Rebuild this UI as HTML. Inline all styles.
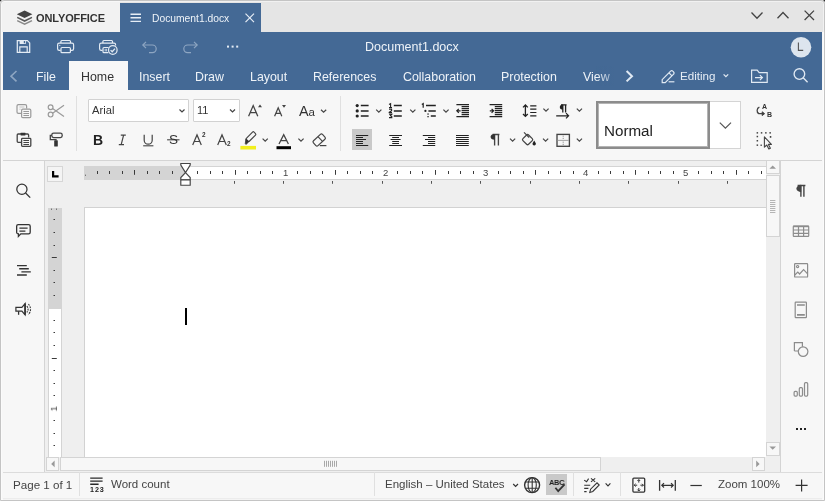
<!DOCTYPE html>
<html><head><meta charset="utf-8">
<style>
*{margin:0;padding:0;box-sizing:border-box}
html,body{width:825px;height:501px;overflow:hidden;background:#2b2b2b}
body{font-family:"Liberation Sans",sans-serif;position:relative}
.a{position:absolute}
svg{position:absolute;overflow:visible}
#win{position:absolute;left:0;top:0;width:825px;height:501px;background:#f7f7f7;border-radius:4px 4px 0 0;overflow:hidden}
#frame{position:absolute;left:0;top:0;width:825px;height:501px;border:1px solid #c4c4c4;border-radius:4px 4px 0 0;pointer-events:none;box-shadow:inset 0 0 0 1px rgba(255,255,255,0.45)}
.t{position:absolute;white-space:nowrap;line-height:1;will-change:transform}
</style></head><body>
<div id="win">
  <!-- title bar -->
  <div class="a" style="left:0;top:0;width:825px;height:32px;background:#e5e5e5"></div>
  <div class="a" style="left:0;top:0;width:120px;height:32px;background:#f2f2f2"></div>
  <div class="a" style="left:120px;top:3px;width:141px;height:29px;background:#446995"></div>

  <!-- logo -->
  <svg style="left:0;top:0" width="120" height="32">
    <path d="M24.6 10.6 L32.4 14.3 L24.6 18 L16.8 14.3 Z" fill="#444"/>
    <path d="M17.2 17.4 L24.6 21 L32 17.4" fill="none" stroke="#5a5a5a" stroke-width="1.6"/>
    <path d="M17.2 20.6 L24.6 24.2 L32 20.6" fill="none" stroke="#8a8a8a" stroke-width="1.6"/>
  </svg>
  <div class="t" style="left:36px;top:13px;font-size:11px;font-weight:bold;color:#333;letter-spacing:-0.1px">ONLYOFFICE</div>
  <!-- doc tab -->
  <svg style="left:0;top:0" width="270" height="32">
    <path d="M130.5 14.2H141M130.5 17.8H141M130.5 21.4H141" stroke="#e6edf5" stroke-width="1.4"/>
    <path d="M245.5 13.7L254 22.2M254 13.7L245.5 22.2" stroke="#e6edf5" stroke-width="1.2"/>
  </svg>
  <div class="t" style="left:151.5px;top:13.5px;font-size:10.3px;color:#eef3f8">Document1.docx</div>
  <!-- window controls -->
  <svg style="left:740px;top:0" width="85" height="32">
    <path d="M11.5 12.5L17 18.3L22.5 12.5" fill="none" stroke="#444" stroke-width="1.3"/>
    <path d="M37.5 18.3L43 12.5L48.5 18.3" fill="none" stroke="#444" stroke-width="1.3"/>
    <path d="M64.6 10.6L74 20M74 10.6L64.6 20" fill="none" stroke="#444" stroke-width="1.3"/>
  </svg>
  <!-- blue header -->
  <div class="a" style="left:3px;top:32px;width:819px;height:58px;background:#446995"></div>

  <!-- home tab -->
  <div class="a" style="left:69px;top:61px;width:59px;height:29px;background:#f7f7f7"></div>
  <!-- header icons -->
  <svg style="left:0;top:0" width="260" height="60" fill="none" stroke="#e3ebf4" stroke-width="1.2">
    <!-- save -->
    <path d="M17.3 40.6H27.4L29.7 42.9V52.3H17.3Z" stroke-width="1.25"/>
    <rect x="19.6" y="40.4" width="6.2" height="3.6" fill="#e3ebf4" stroke="none"/>
    <rect x="23.8" y="41" width="1.2" height="2.2" fill="#446995" stroke="none"/>
    <path d="M19.8 52.3V46.9H27.2V52.3" stroke-width="1.2"/>
    <!-- print -->
    <path d="M60.9 43V41.4A0.9 0.9 0 0 1 61.8 40.5H69.6A0.9 0.9 0 0 1 70.5 41.4V43" stroke-width="1.2"/>
    <path d="M60.6 50.3H59.2A1.6 1.6 0 0 1 57.6 48.7V44.8A1.6 1.6 0 0 1 59.2 43.2H72A1.6 1.6 0 0 1 73.6 44.8V48.7A1.6 1.6 0 0 1 72 50.3H70.6" stroke-width="1.2"/>
    <rect x="61" y="47.5" width="9.4" height="5.2" rx="1" stroke-width="1.2"/>
    <circle cx="59.8" cy="45.3" r="0.6" fill="#e3ebf4" stroke="none"/>
    <!-- quick print -->
    <path d="M102.9 43V41.4A0.9 0.9 0 0 1 103.8 40.5H111.6A0.9 0.9 0 0 1 112.5 41.4V43" stroke-width="1.2"/>
    <path d="M102.6 50.3H101.2A1.6 1.6 0 0 1 99.6 48.7V44.8A1.6 1.6 0 0 1 101.2 43.2H114A1.6 1.6 0 0 1 115.6 44.8V45.4" stroke-width="1.2"/>
    <path d="M108.6 47.5H104A1 1 0 0 0 103 48.5V51.7A1 1 0 0 0 104 52.7H108.4" stroke-width="1.2"/>
    <path d="M105.2 48.8V51.4M106.6 48.8V51.4" stroke-width="0.8"/>
    <circle cx="112.8" cy="50" r="4.3" stroke-width="1.2"/>
    <path d="M110.6 50.1L112.2 51.7L115 48.6" stroke-width="1.3"/>
    <!-- undo/redo -->
    <g stroke="#8ea6c2">
      <path d="M146 41.8L142.8 45L146 48.2"/>
      <path d="M143 45H152.4A3.8 3.8 0 0 1 152.4 52.6H149"/>
      <path d="M194 41.8L197.2 45L194 48.2"/>
      <path d="M197 45H187.6A3.8 3.8 0 0 0 187.6 52.6H191"/>
    </g>
    <g fill="#e3ebf4" stroke="none">
      <rect x="227" y="45.6" width="2" height="2"/>
      <rect x="231.6" y="45.6" width="2" height="2"/>
      <rect x="236.2" y="45.6" width="2" height="2"/>
    </g>
  </svg>
  <div class="t" style="left:365px;top:41.2px;font-size:12.5px;color:#eef3f8">Document1.docx</div>
  <svg style="left:780px;top:30px" width="40" height="30">
    <circle cx="21" cy="17.2" r="10.3" fill="#dde5ee"/>
    <path d="M18.4 12.6V20.4H23.2" fill="none" stroke="#555" stroke-width="1.1"/>
  </svg>
  <!-- tabs -->
  <svg style="left:0;top:60px" width="30" height="30">
    <path d="M16.5 11L11 16.2L16.5 21.4" fill="none" stroke="#8ea6c2" stroke-width="1.6"/>
  </svg>
  <div class="t" style="left:36px;top:70.5px;font-size:12.4px;color:#eef3f8">File</div>
  <div class="t" style="left:81px;top:70.5px;font-size:12.4px;color:#333">Home</div>
  <div class="t" style="left:139.3px;top:70.5px;font-size:12.4px;color:#eef3f8">Insert</div>
  <div class="t" style="left:195.3px;top:70.5px;font-size:12.4px;color:#eef3f8">Draw</div>
  <div class="t" style="left:249.5px;top:70.5px;font-size:12.4px;color:#eef3f8">Layout</div>
  <div class="t" style="left:312.8px;top:70.5px;font-size:12.4px;color:#eef3f8">References</div>
  <div class="t" style="left:402.8px;top:70.5px;font-size:12.4px;color:#eef3f8">Collaboration</div>
  <div class="t" style="left:500.5px;top:70.5px;font-size:12.4px;color:#eef3f8">Protection</div>
  <div class="t" style="left:582.5px;top:70.5px;font-size:12.4px;color:#eef3f8">View</div>
  <div class="a" style="left:596px;top:66px;width:18px;height:20px;background:linear-gradient(90deg,rgba(68,105,149,0),rgba(68,105,149,0.55))"></div>
  <svg style="left:600px;top:60px" width="225" height="30" fill="none" stroke="#e0e9f3" stroke-width="1.35">
    <path d="M26.6 11L32 16.2L26.6 21.4" stroke-width="2"/>
    <!-- pencil -->
    <path d="M62.2 19.6L70.6 11.2A1.5 1.5 0 0 1 72.8 11.2L73.6 12A1.5 1.5 0 0 1 73.6 14.2L65.2 22.6H62.2Z" stroke-width="1.2"/>
    <path d="M69 12.8L72 15.8" stroke-width="1.2"/>
    <path d="M68.6 21.8H74.4" stroke-width="1.2"/>
    <path d="M123.6 14.4L125.9 16.6L128.2 14.4" stroke-width="1.3"/>
    <!-- folder -->
    <path d="M151.6 22.4V10.2H157.2L159.2 12.6H167.2V22.4Z" stroke-width="1.2"/>
    <path d="M155 17.6H162.4M159.9 15.1L162.4 17.6L159.9 20.1" stroke-width="1.2"/>
    <!-- search -->
    <circle cx="199.4" cy="14" r="5.3"/>
    <path d="M203.2 17.8L207.6 22.2"/>
  </svg>
  <div class="t" style="left:679.5px;top:70px;font-size:11.6px;color:#e6edf5">Editing</div>
  <!-- toolbar -->
  <div class="a" style="left:3px;top:90px;width:819px;height:71px;background:#f7f7f7;border-bottom:1px solid #d4d4d4"></div>

  <!-- toolbar content -->
  <div class="a" style="left:76px;top:96px;width:1px;height:55px;background:#e0e0e0"></div>
  <div class="a" style="left:340px;top:96px;width:1px;height:55px;background:#e0e0e0"></div>
  <!-- font combos -->
  <div class="a" style="left:88px;top:99px;width:101px;height:23px;background:#fff;border:1px solid #d2d2d2;border-radius:1px"></div>
  <div class="t" style="left:92.2px;top:105.2px;font-size:11.2px;color:#333">Arial</div>
  <div class="a" style="left:193px;top:99px;width:47px;height:23px;background:#fff;border:1px solid #d2d2d2;border-radius:1px"></div>
  <div class="t" style="left:197.3px;top:105.2px;font-size:11px;color:#333">11</div>
  <svg style="left:0;top:0" width="825" height="160" fill="none" stroke="#444" stroke-width="1.2">
    <!-- combo chevrons -->
    <path d="M179.5 109.5L182 112L184.5 109.5M230 109.5L232.5 112L235 109.5" stroke-width="1.2"/>
    <!-- copy (dim) -->
    <g stroke="#9a9a9a">
      <path d="M21 113.3H18.4A1.4 1.4 0 0 1 17 111.9V106A1.4 1.4 0 0 1 18.4 104.6H25.2A1.4 1.4 0 0 1 26.6 106V108.6" stroke-width="1.2"/>
      <path d="M19.4 107H24.4M19.4 109.2H20.6" stroke-width="1" stroke="#c4c4c4"/>
      <rect x="21.6" y="109.2" width="9.2" height="8.4" rx="1.2" stroke-width="1.2"/>
      <path d="M23.4 111.5H29M23.4 113.5H29M23.4 115.5H29" stroke-width="1"/>
      <!-- cut -->
      <circle cx="50.6" cy="107.2" r="2.4"/>
      <circle cx="50.6" cy="114.6" r="2.4"/>
      <path d="M52.6 108.6L64 116.6M52.6 113.2L64 105.2"/>
    </g>
    <!-- paste -->
    <path d="M21 142.3H18.2A1 1 0 0 1 17.2 141.3V135A1 1 0 0 1 18.2 134H20.2M25.8 134H27.6A1 1 0 0 1 28.6 135V137.4" stroke-width="1.3"/>
    <rect x="20.2" y="132.8" width="5.6" height="2.6" rx="0.8" fill="#333" stroke="none"/>
    <rect x="21.6" y="138.4" width="9.2" height="8" rx="0.8" stroke-width="1.3"/>
    <path d="M23.4 140.5H29M23.4 142.5H29M23.4 144.5H29" stroke-width="1.1"/>
    <!-- format painter -->
    <rect x="51.8" y="133.2" width="10.4" height="4.4" rx="1.8" stroke-width="1.3"/>
    <path d="M51.8 135.4H50.3V139.6H56V140.6" stroke-width="1.3"/>
    <rect x="54.2" y="140.2" width="3.6" height="6.4" rx="0.6" fill="#333" stroke="none"/>
    <!-- A^ A_ Aa -->
    <g stroke="none" fill="#444">
      <path d="M252.5 104.5L256.3 96.5"/>
    </g>
    <path d="M248.6 116.2L253.2 105.6L257.8 116.2M250.2 112.6H256.2" stroke-width="1.3"/>
    <path d="M258 107.2L260 104.4L262 107.2Z" fill="#444" stroke="none"/>
    <path d="M274.6 116.2L278.2 107.8L281.8 116.2M275.9 113.4H280.6" stroke-width="1.25"/>
    <path d="M282 105L284 107.8L286 105Z" fill="#444" stroke="none"/>
    <path d="M321 109.8L323.6 112.2L326.2 109.8"/>
    <!-- B I U S A2 A2 -->
    <path d="M120.8 135.2H125.8M118.8 144.6H124M123.6 135.2L121.2 144.6" stroke-width="1.2"/>
    <path d="M144.2 134.8V140.2A4 4 0 0 0 152.2 140.2V134.8" stroke-width="1.2"/>
    <path d="M143.2 145.8H153.4" stroke-width="1.1"/>
    <path d="M167.1 139.8H179.5" stroke-width="1.1"/>
    <path d="M192.7 145L197 134.9L201.3 145M194.2 141.5H199.8" stroke-width="1.2"/>
    <path d="M217.7 145L222 134.9L226.3 145M219.2 141.5H224.8" stroke-width="1.2"/>
    <!-- highlight -->
    <g transform="translate(249.4 138.2) rotate(-45)">
      <rect x="-3" y="-2.1" width="10.6" height="4.2" rx="1.1" stroke-width="1.15"/>
      <path d="M-3 -2.1L-6.8 1V2.1H-3Z" fill="#333" stroke="#333" stroke-width="0.7"/>
    </g>
    <rect x="240.4" y="145.9" width="15.6" height="3.6" fill="#f2ef1e" stroke="none"/>
    <path d="M262.6 138.6L265.2 141.2L267.8 138.6"/>
    <!-- font color -->
    <path d="M279 144L283.7 134.7L288.4 144M280.7 140.6H286.7" stroke-width="1.3"/>
    <rect x="276.5" y="146.2" width="14.5" height="3" fill="#000" stroke="none"/>
    <path d="M298.4 138.6L301 141.2L303.6 138.6"/>
    <!-- eraser -->
    <g transform="translate(319.2 140) rotate(-43)">
      <rect x="-6.2" y="-3.3" width="12.4" height="6.6" rx="1.5" stroke-width="1.2"/>
      <path d="M1.4 -3.3V3.3" stroke-width="1.1"/>
    </g>
    <path d="M319.8 145.6H326.4" stroke-width="1.2"/>
  </svg>
  <div class="t" style="left:92.8px;top:132.6px;font-size:14px;font-weight:bold;color:#222">B</div>
  <div class="t" style="left:169.3px;top:132.8px;font-size:13.6px;color:#333">S</div>
  <div class="t" style="left:201.5px;top:132.4px;font-size:6.4px;font-weight:bold;color:#333">2</div>
  <div class="t" style="left:226.8px;top:140.6px;font-size:6.4px;font-weight:bold;color:#333">2</div>
  <div class="t" style="left:299.2px;top:103.6px;font-size:14.4px;color:#333">A<span style="font-size:11.5px">a</span></div>

  <!-- paragraph group -->
  <div class="a" style="left:352px;top:129.4px;width:20.4px;height:20.3px;background:#c9c9c9"></div>
  <svg style="left:0;top:0" width="825" height="160" fill="none" stroke="#444" stroke-width="1.2">
    <!-- bullets -->
    <g fill="#222" stroke="none">
      <circle cx="357.2" cy="105.6" r="1.6"/><circle cx="357.2" cy="110.9" r="1.6"/><circle cx="357.2" cy="116" r="1.6"/>
    </g>
    <path d="M360.8 105.6H368.6M360.8 110.9H368.6M360.8 116H368.6" stroke="#222" stroke-width="1.5"/>
    <path d="M376.2 109.6L378.8 112.2L381.4 109.6"/>
    <!-- numbered -->
    <path d="M393.8 105.6H401.8M393.8 110.9H401.8M393.8 116H401.8" stroke="#222" stroke-width="1.5"/>
    <path d="M389 104.4L390.6 103.6V107.6M389 107.6H392M389 109.2H391.6V110.6L389.2 112.2V112.6H392M389 114.2H391.8L390.4 115.6L391.8 116.6V117.6H389" stroke="#222" stroke-width="1.1"/>
    <path d="M410.2 109.6L412.8 112.2L415.4 109.6"/>
    <!-- multilevel -->
    <path d="M426 105.6H435.8M428.4 110.9H435.8M430.8 116H435.8" stroke="#222" stroke-width="1.5"/>
    <path d="M421.8 104.4L423.2 103.6V107.8" stroke="#222" stroke-width="1.2"/>
    <g fill="#222" stroke="none"><circle cx="425.4" cy="110.9" r="1.1"/><rect x="427.4" y="113.4" width="1.3" height="1.3"/><rect x="427.4" y="116" width="1.3" height="1.3"/></g>
    <path d="M443.4 109.6L446 112.2L448.6 109.6"/>
    <!-- decrease indent -->
    <path d="M456.4 104.6H469M461.6 106.6H469M461.6 108.6H469M461.6 110.6H469M461.6 112.6H469M461.6 114.6H469M456.4 116.6H469" stroke="#222" stroke-width="1.1"/>
    <path d="M460.6 110.8H456.8M458.8 108.8L456.8 110.8L458.8 112.8" stroke="#222" stroke-width="1.2"/>
    <!-- increase indent -->
    <path d="M489.6 104.6H502.2M494.8 106.6H502.2M494.8 108.6H502.2M494.8 110.6H502.2M494.8 112.6H502.2M494.8 114.6H502.2M489.6 116.6H502.2" stroke="#222" stroke-width="1.1"/>
    <path d="M489.8 110.8H493.6M491.6 108.8L493.6 110.8L491.6 112.8" stroke="#222" stroke-width="1.2"/>
    <!-- line spacing -->
    <path d="M525.4 105V116.4M523 107.4L525.4 105L527.8 107.4M523 114L525.4 116.4L527.8 114" stroke="#222" stroke-width="1.3"/>
    <path d="M530.2 105.8H536.4M530.2 109.2H536.4M530.2 112.5H536.4M530.2 115.9H536.4" stroke="#222" stroke-width="1.2"/>
    <path d="M543.4 108.6L546 111.2L548.6 108.6"/>
    <!-- para direction -->
    <path d="M562.8 104.8V112.4M565.6 104.8V112.4M561 104.9H566.6" stroke="#222" stroke-width="1.3"/>
    <path d="M563 104.4A3.2 2.6 0 0 0 563 109.6Z" fill="#222" stroke="none"/>
    <path d="M556.2 115.8H568.6M566 113.2L568.6 115.8L566 118.4" stroke="#222" stroke-width="1.2"/>
    <path d="M576.8 108.6L579.4 111.2L582 108.6"/>
    <!-- align -->
    <path d="M356 135.5H368.2M356 137.5H363M356 139.5H366M356 141.5H363M356 143.5H363M356 145.5H368.2M389.2 135.5H402M392.2 137.5H399M390.6 139.5H400.6M392.2 141.5H399M392.2 143.5H399M389.2 145.5H402M422.8 135.5H435.2M428 137.5H435.2M425 139.5H435.2M428 141.5H435.2M428 143.5H435.2M422.8 145.5H435.2M456 135.5H468.8M456 137.5H468.8M456 139.5H468.8M456 141.5H468.8M456 143.5H468.8M456 145.5H468.8" stroke="#222" stroke-width="1.15"/>
    <!-- pilcrow -->
    <path d="M494.6 134.4V145.6M498.4 134.4V145.6M492.6 134.5H499.4" stroke-width="1.35"/>
    <path d="M494.8 133.9A4.2 2.9 0 0 0 494.8 139.7Z" fill="#333" stroke="none"/>
    <path d="M510 138.6L512.6 141.2L515.2 138.6"/>
    <!-- shading -->
    <g transform="translate(527.6 139.6) rotate(45)">
      <rect x="-4" y="-4" width="8" height="8" rx="1.4" stroke-width="1.25"/>
    </g>
    <path d="M524 132.3L529.2 137.5" stroke-width="1.2"/>
    <path d="M534.2 140.6L535.8 143.2A1.7 1.7 0 1 1 532.6 143.2Z" fill="#222" stroke="none"/>
    <path d="M543 138.6L545.6 141.2L548.2 138.6"/>
    <!-- borders -->
    <rect x="557" y="134.4" width="12.4" height="11.9" stroke-width="1.35"/>
    <path d="M557.6 140.4H568.8" stroke="#999" stroke-width="0.9"/>
    <path d="M563.2 135.6V136.8M563.2 137.8V139M563.2 141.6V142.8M563.2 143.8V145" stroke="#888" stroke-width="0.9"/>
    <path d="M576.8 138.6L579.4 141.2L582 138.6"/>
    <!-- change case -->
    <path d="M759.4 107.2A3.6 3.6 0 0 0 758.8 113.6H762.8" stroke-width="1.3"/>
    <path d="M762.2 111.8L764.6 113.7L762.2 115.6Z" fill="#333" stroke-width="1"/>
    <!-- select -->
    <g fill="#444" stroke="none">
      <rect x="756.6" y="132.1" width="1.5" height="1.5"/><rect x="760.8" y="132.1" width="1.5" height="1.5"/><rect x="765.1" y="132.1" width="1.5" height="1.5"/><rect x="769.4" y="132.1" width="1.5" height="1.5"/>
      <rect x="756.6" y="135.8" width="1.5" height="1.5"/><rect x="756.6" y="140" width="1.5" height="1.5"/><rect x="756.6" y="144.4" width="1.5" height="1.5"/>
      <rect x="760.4" y="144.6" width="1.6" height="1.2"/>
      <rect x="769.8" y="136" width="1.5" height="1.8"/>
    </g>
    <path d="M764.4 136.8V147.2L766.8 145L768.8 149L770.4 148.2L768.4 144.4H771.4Z" fill="#f7f7f7" stroke-width="1.1" stroke-linejoin="round"/>
  </svg>
  <div class="t" style="left:761.9px;top:102.6px;font-size:7px;font-weight:bold;color:#333">A</div>
  <div class="t" style="left:767px;top:111.2px;font-size:7px;font-weight:bold;color:#333">B</div>
  <!-- style box -->
  <div class="a" style="left:596px;top:101px;width:145px;height:48px;background:#fff;border:1px solid #d4d4d4"></div>
  <div class="a" style="left:596px;top:101px;width:114px;height:48px;background:#fff;border:2px solid #8c8c8c;box-shadow:inset 0 0 0 1px #b4b4b4"></div>
  <svg style="left:0;top:0" width="825" height="160">
    <path d="M719.8 122.6L725.4 128.2L731 122.6" fill="none" stroke="#555" stroke-width="1.2"/>
  </svg>
  <div class="t" style="left:604px;top:122.8px;font-size:15.2px;color:#222">Normal</div>
  <!-- doc area -->
  <div class="a" style="left:45px;top:161px;width:735px;height:311px;background:#efefef"></div>
  <!-- left panel -->
  <div class="a" style="left:3px;top:161px;width:42px;height:311px;background:#f7f7f7;border-right:1px solid #d4d4d4"></div>
  <!-- right panel -->
  <div class="a" style="left:780px;top:161px;width:42px;height:311px;background:#f7f7f7;border-left:1px solid #d4d4d4"></div>
  <!-- page -->
  <div class="a" style="left:83.8px;top:207px;width:682.2px;height:250px;background:#ffffff;border-left:1px solid #d2d2d2;border-top:1px solid #d2d2d2"></div>
  <!-- status bar -->

  <!-- ruler -->
  <div class="a" style="left:47px;top:166px;width:16px;height:16px;background:#f4f4f4;border:1px solid #d6d6d6"></div>
  <svg style="left:0;top:0" width="825" height="501">
    <path d="M53.1 170.9V176.3H58.6" fill="none" stroke="#000" stroke-width="2.2"/>
  </svg>
  <div class="a" style="left:84px;top:166px;width:682px;height:14px;background:#fff;border-top:1px solid #d4d4d4;border-bottom:1px solid #d4d4d4"></div>
  <div class="a" style="left:84px;top:166px;width:101px;height:14px;background:#d4d4d4"></div>
  <svg style="left:0;top:0" width="825" height="501" fill="none" stroke="#3a3a3a" stroke-width="1">
    <path d="M97.5 171V174M109.5 171V174M122.5 171V174M147.5 171V174M159.5 171V174M172.5 171V174M197.5 171V174M210.5 171V174M222.5 171V174M247.5 171V174M260.5 171V174M272.5 171V174M297.5 171V174M310.5 171V174M322.5 171V174M347.5 171V174M360.5 171V174M372.5 171V174M397.5 171V174M410.5 171V174M422.5 171V174M448.5 171V174M460.5 171V174M473.5 171V174M498.5 171V174M510.5 171V174M523.5 171V174M548.5 171V174M560.5 171V174M573.5 171V174M598.5 171V174M610.5 171V174M623.5 171V174M648.5 171V174M660.5 171V174M673.5 171V174M698.5 171V174M711.5 171V174M723.5 171V174M748.5 171V174M761.5 171V174"/>
    <path d="M134.5 170V174.8M235.5 170V174.8M335.5 170V174.8M435.5 170V174.8M535.5 170V174.8M635.5 170V174.8M736.5 170V174.8"/>
    <path d="M234.5 181V183.8M283.5 181V183.8M332.5 181V183.8M382.5 181V183.8M431.5 181V183.8M480.5 181V183.8M530.5 181V183.8M579.5 181V183.8M628.5 181V183.8M678.5 181V183.8M727.5 181V183.8" stroke="#555"/>
    <path d="M85.5 174.6V176" stroke="#777"/>
  </svg>
  <div class="t" style="left:282.5px;top:168.4px;font-size:9.5px;color:#444">1</div>
  <div class="t" style="left:382.7px;top:168.4px;font-size:9.5px;color:#444">2</div>
  <div class="t" style="left:482.9px;top:168.4px;font-size:9.5px;color:#444">3</div>
  <div class="t" style="left:583.1px;top:168.4px;font-size:9.5px;color:#444">4</div>
  <div class="t" style="left:683.3px;top:168.4px;font-size:9.5px;color:#444">5</div>

  <svg style="left:0;top:0" width="825" height="501" fill="#fff" stroke="#444" stroke-width="1.15">
    <path d="M180.8 163.5H190.2V165L185.5 172.6L180.8 165Z"/>
    <path d="M185.5 172.6L190.2 177.6V185.2H180.8V177.6Z"/>
    <path d="M180.8 179.8H190.2" stroke-width="1.4"/>
  </svg>
  <!-- vertical ruler -->
  <div class="a" style="left:48px;top:208px;width:14px;height:249px;background:#fff;border-left:1px solid #d4d4d4;border-right:1px solid #d4d4d4"></div>
  <div class="a" style="left:48px;top:208px;width:14px;height:100.6px;background:#d4d4d4"></div>
  <svg style="left:0;top:0" width="825" height="501" fill="none" stroke="#3a3a3a" stroke-width="1">
    <path d="M53.5 219.5H55M53.5 232.5H55M53.5 245.5H55M51.8 257.5H56.8M53.5 270.5H55M53.5 282.5H55M53.5 295.5H55M53.5 320.5H55M53.5 332.5H55M53.5 345.5H55M51.8 358.5H56.8M53.5 370.5H55M53.5 383.5H55M53.5 395.5H55M53.5 420.5H55M53.5 433.5H55M53.5 445.5H55"/>
    <path d="M51.5 208.5V210M56.5 208.5V210" stroke="#777"/>
  </svg>
  <div class="t" style="left:51.4px;top:403.6px;font-size:9.5px;color:#444;transform:rotate(-90deg);transform-origin:50% 50%">1</div>
  <div class="a" style="left:3px;top:472px;width:819px;height:26px;background:#f7f7f7;border-top:1px solid #dcdcdc"></div>

  <!-- cursor -->
  <div class="a" style="left:184.8px;top:308px;width:2px;height:17px;background:#000"></div>
  <!-- vertical scrollbar -->
  <div class="a" style="left:766px;top:161px;width:14px;height:296px;background:#efefef"></div>
  <div class="a" style="left:766px;top:160px;width:13.5px;height:14px;background:#f7f7f7;border:1px solid #d4d4d4"></div>
  <div class="a" style="left:766px;top:175px;width:13.5px;height:62px;background:#f7f7f7;border:1px solid #d4d4d4"></div>
  <div class="a" style="left:766px;top:442px;width:13.5px;height:14px;background:#f7f7f7;border:1px solid #d4d4d4"></div>
  <!-- horizontal scrollbar -->
  <div class="a" style="left:45px;top:456.5px;width:735px;height:15.5px;background:#efefef"></div>
  <div class="a" style="left:46px;top:457px;width:13px;height:14px;background:#f7f7f7;border:1px solid #d4d4d4"></div>
  <div class="a" style="left:60px;top:457px;width:541px;height:14px;background:#f7f7f7;border:1px solid #d4d4d4"></div>
  <div class="a" style="left:752px;top:457px;width:13px;height:14px;background:#f7f7f7;border:1px solid #d4d4d4"></div>
  <svg style="left:0;top:0" width="825" height="501" fill="#999" stroke="none">
    <path d="M769.4 168.8H776L772.7 165.4Z"/>
    <path d="M769.4 446.4H776L772.7 449.8Z"/>
    <path d="M54.6 460.6V467.2L51.2 463.9Z"/>
    <path d="M756.2 460.6V467.2L759.6 463.9Z"/>
    <path d="M770 200.5H775.4M770 202.5H775.4M770 204.5H775.4M770 206.5H775.4M770 208.5H775.4M770 210.5H775.4M770 212.5H775.4" stroke="#b4b4b4" stroke-width="1"/>
    <path d="M324.5 460.8V466.8M326.5 460.8V466.8M328.5 460.8V466.8M330.5 460.8V466.8M332.5 460.8V466.8M334.5 460.8V466.8M336.5 460.8V466.8" stroke="#a8a8a8" stroke-width="1"/>
  </svg>
  <!-- left panel icons -->
  <svg style="left:0;top:0" width="825" height="501" fill="none" stroke="#333" stroke-width="1.25">
    <circle cx="21.9" cy="189.25" r="5.1"/>
    <path d="M25.6 193L30.2 197.6" stroke-width="1.3"/>
    <path d="M18.2 224.6H28.6A1.6 1.6 0 0 1 30.2 226.2V232.2A1.6 1.6 0 0 1 28.6 233.8H20.8L18.4 236.4V233.8A1.6 1.6 0 0 1 16.65 232.2V226.2A1.6 1.6 0 0 1 18.2 224.6Z" stroke-width="1.3"/>
    <path d="M19.4 228.1H27.6M19.4 231.15H25.4" stroke-width="1.3"/>
    <path d="M17 265.6H26.8M19.2 268.7H28.8M21.4 271.9H30.8M17 275H26.8" stroke-width="1.35"/>
    <path d="M15.9 307.4H21.9L25.1 303.6V314.8L21.9 311.2H15.9Z" stroke-width="1.2"/>
    <path d="M25.1 303.6V314.8" stroke-width="1.6"/>
    <path d="M18.6 311.2V314.8" stroke-width="1.3"/>
    <path d="M26.8 306.2A4.4 4.4 0 0 1 26.8 312.4M28.4 304.2A7.2 7.2 0 0 1 28.4 314.4" stroke-width="1.1" stroke-dasharray="1.8 0.9"/>
  </svg>
  <!-- right panel icons -->
  <svg style="left:0;top:0" width="825" height="501" fill="none" stroke="#444" stroke-width="1.2">
    <path d="M800.9 185.4V196.8M803.9 185.4V196.8M797.6 185.5H805.4" stroke-width="1.4"/>
    <path d="M801.2 184.8A4.8 3.7 0 0 0 801.2 192.2Z" fill="#444" stroke="none"/>
    <g stroke="#8c8c8c">
      <rect x="793.3" y="226.2" width="15.4" height="10.2" rx="0.6"/>
      <path d="M793.3 226.4H808.7" stroke-width="1.6"/>
      <path d="M793.3 230H808.7M793.3 233.3H808.7M798.5 226.2V236.4M803.6 226.2V236.4"/>
      <rect x="794.6" y="263.6" width="13" height="13.4" rx="0.6"/>
      <circle cx="797.6" cy="266.6" r="1.1"/>
      <path d="M794.8 275L797.8 272L799.6 274L803.6 269.6L807.6 273.8"/>
      <rect x="795.2" y="302.2" width="11.2" height="15.4" rx="0.6"/>
      <path d="M797 305H804.8M797 314.8H804.8" stroke-width="1.7"/>
      <path d="M794.4 351V342.7H802.4V346.8M794.4 351H798"/>
      <circle cx="803.1" cy="351.6" r="4.8"/>
      <rect x="794.1" y="391.4" width="3.2" height="4.8" rx="1.1"/>
      <rect x="799.3" y="387.6" width="3.2" height="8.6" rx="1.1"/>
      <rect x="804.5" y="382.6" width="3.2" height="13.6" rx="1.1"/>
    </g>
    <g fill="#222" stroke="none">
      <rect x="796" y="428" width="2" height="2"/>
      <rect x="800" y="428" width="2" height="2"/>
      <rect x="804" y="428" width="2" height="2"/>
    </g>
  </svg>
  <!-- status bar content -->
  <div class="a" style="left:3px;top:498px;width:819px;height:2px;background:#ececec"></div>
  <div class="a" style="left:79px;top:472px;width:1px;height:24px;background:#e0e0e0"></div>
  <div class="a" style="left:374px;top:472px;width:1px;height:24px;background:#e0e0e0"></div>
  <div class="a" style="left:573px;top:472px;width:1px;height:24px;background:#e0e0e0"></div>
  <div class="a" style="left:620px;top:472px;width:1px;height:24px;background:#e0e0e0"></div>
  <div class="a" style="left:546.4px;top:474.3px;width:20.5px;height:20.4px;background:#c9c9c9"></div>
  <div class="t" style="left:12.8px;top:479.2px;font-size:11.6px;color:#444">Page 1 of 1</div>
  <div class="t" style="left:110.6px;top:479.2px;font-size:11.5px;color:#444">Word count</div>
  <div class="t" style="left:385.4px;top:479.2px;font-size:11.5px;color:#444">English – United States</div>
  <div class="t" style="left:717.8px;top:479.2px;font-size:11.5px;color:#444">Zoom 100%</div>
  <svg style="left:0;top:0" width="825" height="501" fill="none" stroke="#333" stroke-width="1.2">
    <!-- word count -->
    <path d="M90.2 478.1H102.6M90.2 481.1H102.6M90.2 484.2H98.6" stroke-width="1.4" stroke="#2a2a2a"/>
    <!-- chevron lang -->
    <path d="M513.2 484L515.6 486.4L518 484"/>
    <!-- globe -->
    <circle cx="532.1" cy="485.1" r="7.5" stroke-width="1.4"/>
    <ellipse cx="532.2" cy="485.1" rx="4.1" ry="7.4" stroke-width="1.1"/>
    <path d="M532.2 477.8V492.4M525.6 482H538.8M525.6 488.3H538.8" stroke-width="1.1"/>
    <!-- spell check -->
    <path d="M555.4 487.8L558.2 491.2L564.6 484.4" stroke-width="1.8"/>
    <!-- track changes -->
    <path d="M584.2 480.1L586.6 481.8L588.6 478.6M591 478.3L595.2 481.8M595.2 478.3L591 481.8" stroke-width="1.1"/>
    <path d="M584.2 485.3H590.2M584.2 488.4H588.4M584.2 491.6H586.6" stroke-width="1.1"/>
    <path d="M589.8 492.4L590.6 489.2L597 482.8L599.2 485L592.8 491.4Z" stroke-width="1.1"/>
    <path d="M605.6 483.4L608 485.8L610.4 483.4"/>
    <!-- fit page -->
    <rect x="632.9" y="478.1" width="11.8" height="14" rx="1" stroke-width="1.3"/>
    <path d="M638.8 479.6V482.6M637.4 481L638.8 479.6L640.2 481M638.8 488V491M637.4 489.6L638.8 491L640.2 489.6M634.2 485.2H637.2M635.6 483.8L634.2 485.2L635.6 486.6M640.4 485.2H643.4M642 483.8L643.4 485.2L642 486.6" stroke-width="1"/>
    <!-- fit width -->
    <path d="M659.6 480V490.8M675.3 480V490.8" stroke-width="1.3"/>
    <path d="M661.8 485.3H673.2M664 483.1L661.8 485.3L664 487.5M671 483.1L673.2 485.3L671 487.5" stroke-width="1.2"/>
    <!-- minus / plus -->
    <path d="M690.4 485.5H701.8"/>
    <path d="M795.6 485.4H807.6M801.6 479.4V491.4"/>
  </svg>
  <div class="t" style="left:89.6px;top:486.2px;font-size:7.2px;color:#222;letter-spacing:0.9px;font-weight:bold">123</div>
  <div class="t" style="left:549px;top:478.6px;font-size:8px;font-weight:bold;color:#222;letter-spacing:-0.3px;transform:scaleX(0.92);transform-origin:0 0">ABC</div>
</div>
<div id="frame"></div>
</body></html>
